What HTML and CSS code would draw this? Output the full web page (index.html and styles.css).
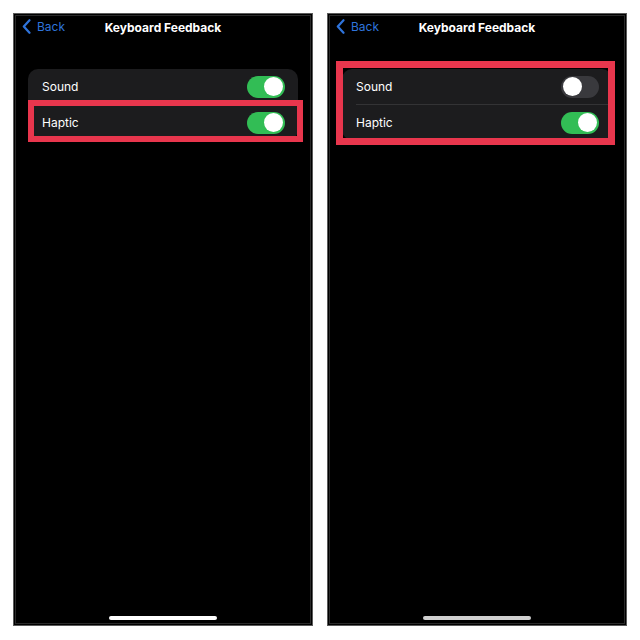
FILE: index.html
```html
<!DOCTYPE html>
<html>
<head>
<meta charset="utf-8">
<link rel="stylesheet" href="styles.css">
</head>
<body>
<div class="wrap">
  <div class="phone">
    <div class="nav">
      <div class="back">
        <svg class="chev" width="9" height="15" viewBox="0 0 9 15"><path d="M7.5 1.2 L1.8 7.5 L7.5 13.8" fill="none" stroke="#2f74dc" stroke-width="2.2" stroke-linecap="round" stroke-linejoin="round"/></svg>
        <span>Back</span>
      </div>
      <div class="title">Keyboard Feedback</div>
    </div>
    <div class="card">
      <div class="row"><span class="label">Sound</span><span class="toggle on"><span class="knob"></span></span></div>
      <div class="row"><span class="label">Haptic</span><span class="toggle on"><span class="knob"></span></span></div>
    </div>
    <div class="home"></div>
    <div class="mark mark-left"></div>
  </div>
  <div class="phone">
    <div class="nav">
      <div class="back">
        <svg class="chev" width="9" height="15" viewBox="0 0 9 15"><path d="M7.5 1.2 L1.8 7.5 L7.5 13.8" fill="none" stroke="#2f74dc" stroke-width="2.2" stroke-linecap="round" stroke-linejoin="round"/></svg>
        <span>Back</span>
      </div>
      <div class="title">Keyboard Feedback</div>
    </div>
    <div class="card">
      <div class="row"><span class="label">Sound</span><span class="toggle off"><span class="knob"></span></span></div>
      <div class="row"><span class="label">Haptic</span><span class="toggle on"><span class="knob"></span></span></div>
    </div>
    <div class="home home-dim"></div>
    <div class="mark mark-right"></div>
  </div>
</div>
</body>
</html>
```
FILE: styles.css
```css
html, body {
  margin: 0;
  padding: 0;
  background: #ffffff;
}
body {
  width: 640px;
  height: 640px;
  overflow: hidden;
  font-family: Inter, "Liberation Sans", Arial, sans-serif;
}
.wrap {
  display: flex;
  gap: 14px;
  padding: 13px 0 0 13px;
}
.phone {
  position: relative;
  box-sizing: border-box;
  width: 300px;
  height: 613px;
  background: #000;
  border: 1px solid #5a5a5a;
  box-shadow: inset 0 0 0 1px #000, inset 0 0 0 2px #2a2a2a;
  display: flex;
  flex-direction: column;
}
.nav {
  position: relative;
  height: 27px;
  display: flex;
  align-items: center;
  justify-content: center;
}
.back {
  position: absolute;
  left: 8px;
  top: 5px;
  display: flex;
  align-items: center;
  gap: 6px;
  color: #2f74dc;
  font-size: 12px;
}
.chev { display: block; }
.title {
  color: #fff;
  font-weight: 700;
  font-size: 12px;
}
.card {
  margin: 28px 14px 0 14px;
  background: #1c1c1e;
  border-radius: 10px;
  overflow: hidden;
}
.row {
  height: 35px;
  display: flex;
  align-items: center;
  justify-content: space-between;
  padding: 0 13px 0 14px;
  color: #fff;
  font-size: 12px;
}
.row + .row {
  border-top: 1px solid #333335;
  margin-left: 14px;
  padding-left: 0;
}
.toggle {
  position: relative;
  width: 38px;
  height: 22px;
  border-radius: 11px;
  display: flex;
  align-items: center;
  padding: 0 2px;
  box-sizing: border-box;
}
.toggle.on { background: #32bd55; justify-content: flex-end; }
.toggle.off { background: #39393d; justify-content: flex-start; }
.knob {
  width: 19px;
  height: 19px;
  border-radius: 50%;
  background: #fff;
}
.home {
  margin: auto auto 5px auto;
  width: 108px;
  height: 4px;
  border-radius: 2px;
  background: #fff;
}
.home-dim { background: #d0d0d0; }
.mark {
  position: absolute;
  box-sizing: border-box;
  border: 6px solid #e8364d;
}
.mark-left {
  left: 14px;
  top: 86px;
  width: 275px;
  height: 42px;
}
.mark-right {
  left: 8px;
  top: 47px;
  width: 279px;
  height: 84px;
  border-width: 7px;
}
```
